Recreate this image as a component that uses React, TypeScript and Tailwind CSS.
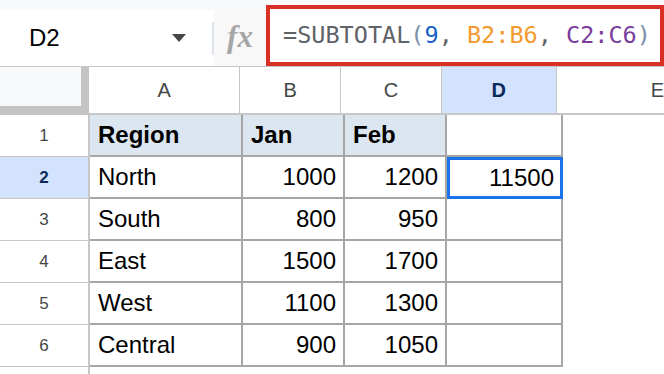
import React from 'react';

const rows = [
  { n: 1, a: 'Region', b: 'Jan', c: 'Feb', d: '', head: true },
  { n: 2, a: 'North', b: '1000', c: '1200', d: '11500' },
  { n: 3, a: 'South', b: '800', c: '950', d: '' },
  { n: 4, a: 'East', b: '1500', c: '1700', d: '' },
  { n: 5, a: 'West', b: '1100', c: '1300', d: '' },
  { n: 6, a: 'Central', b: '900', c: '1050', d: '' },
];

export default function App() {
  return (
    <div className="w-[664px] h-[374px] bg-white overflow-hidden font-['Liberation_Sans',Arial,sans-serif] text-black">
      {/* Toolbar: name box + formula bar */}
      <div className="h-[67px] flex bg-[#f8f9fb] border-b border-[#c7c7c7]">
        <div className="w-[214px] h-[56px] mt-[10px] bg-white flex items-center">
          <span className="pl-[29px] text-[24px] leading-none">D2</span>
          <svg className="ml-auto mr-[26px]" width="14" height="8" viewBox="0 0 14 8">
            <path d="M0 0 L14 0 L7 8 Z" fill="#444746" />
          </svg>
          <div className="w-[2px] h-[33px] bg-[#dde3ea]" />
        </div>
        <div className="w-[52px] h-[56px] mt-[10px] bg-[#f8f8f8] flex items-center justify-center">
          <span className="font-['Liberation_Serif',serif] italic font-bold text-[31px] leading-none text-[#a6a6a6] -mt-[4px]">fx</span>
        </div>
        <div className="flex-1 h-[61px] mt-[5px] border-4 border-[#d93025] bg-white flex items-center pl-[13px] overflow-hidden">
          <span className="font-['DejaVu_Sans_Mono',monospace] text-[23.5px] whitespace-pre">
            <span className="text-[#5f6368]">=SUBTOTAL</span>
            <span className="text-[#7b8fa8]">(</span>
            <span className="text-[#1a5fc8]">9</span>
            <span className="text-[#5f6368]">, </span>
            <span className="text-[#f29a2e]">B2:B6</span>
            <span className="text-[#5f6368]">, </span>
            <span className="text-[#7a3d9c]">C2:C6</span>
            <span className="text-[#7b8fa8]">)</span>
          </span>
        </div>
      </div>

      {/* Column headers */}
      <div className="flex h-[48px] text-[20px] text-[#444746]">
        <div className="w-[90px] h-[48px] bg-[#c4c4c4] pr-[8px] pb-[9px]">
          <div className="w-full h-full bg-[#f8f9fa]" />
        </div>
        <div className="w-[153px] flex items-center justify-center border-r border-b-2 border-[#c7c7c7]">A</div>
        <div className="w-[102px] flex items-center justify-center border-r border-b-2 border-[#c7c7c7]">B</div>
        <div className="w-[102px] flex items-center justify-center border-r border-b-2 border-[#c7c7c7]">C</div>
        <div className="w-[116px] flex items-center justify-center border-r border-b-2 border-[#c7c7c7] bg-[#d3e3fd] font-bold text-[#0b2a5c]">D</div>
        <div className="flex-1 flex items-center pl-[94px] border-b-2 border-[#c7c7c7]">E</div>
      </div>

      {/* Data rows */}
      {rows.map((r) => {
        const sel = r.n === 2;
        const cell = 'h-[42px] flex items-center border-r-2 border-b-2 border-[#a6a6a6] text-[24px]';
        const headBg = r.head ? 'bg-[#dce6f1] font-bold' : 'bg-white';
        return (
          <div key={r.n} className="flex h-[42px]">
            <div
              className={`w-[90px] h-[42px] flex items-center justify-center border-r-2 border-b border-[#c7c7c7] text-[17px] ${
                sel ? 'bg-[#d3e3fd] font-bold text-[#0b2a5c]' : 'text-[#444746]'
              }`}
            >
              {r.n}
            </div>
            <div className={`w-[153px] pl-[8px] ${cell} ${headBg}`}>{r.a}</div>
            <div className={`w-[102px] ${r.head ? 'pl-[8px]' : 'justify-end pr-[7px]'} ${cell} ${headBg}`}>{r.b}</div>
            <div className={`w-[102px] ${r.head ? 'pl-[8px]' : 'justify-end pr-[7px]'} ${cell} ${headBg}`}>{r.c}</div>
            {sel ? (
              <div className="w-[116px] h-[42px] flex items-center justify-end pr-[6px] border-[3px] border-[#1a73e8] text-[24px]">
                {r.d}
              </div>
            ) : (
              <div className={`w-[116px] ${cell}`}>{r.d}</div>
            )}
            <div className="flex-1" />
          </div>
        );
      })}
      <div className="flex h-[10px]">
        <div className="w-[90px] border-r-2 border-[#c7c7c7]" />
      </div>
    </div>
  );
}
